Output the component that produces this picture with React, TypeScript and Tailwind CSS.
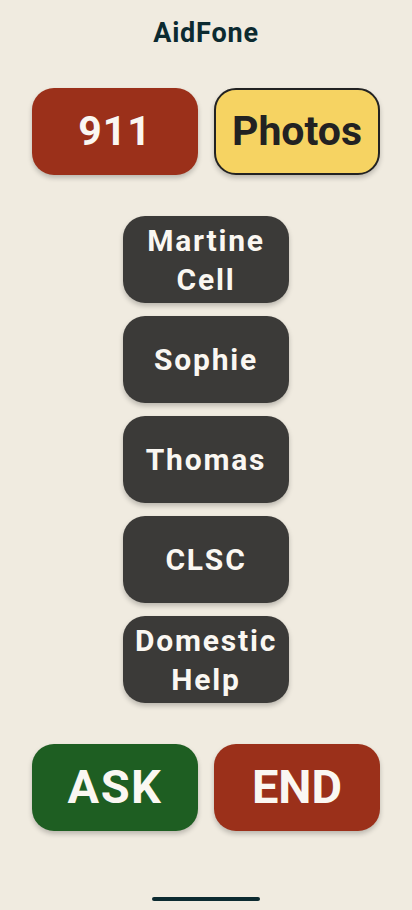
import React from 'react';

const contacts = [
  ['Martine', 'Cell'],
  ['Sophie'],
  ['Thomas'],
  ['CLSC'],
  ['Domestic', 'Help'],
];

const bigBtn =
  'w-[166px] h-[87px] rounded-[22px] flex items-center justify-center font-bold shadow-[0_3px_5px_rgba(0,0,0,0.22)]';

const App: React.FC = () => {
  return (
    <div
      className="w-[412px] h-[910px] bg-[#f0ebe0] flex flex-col items-center"
      style={{ fontFamily: 'Roboto, "Liberation Sans", sans-serif' }}
    >
      <h1 className="mt-[16px] h-[34px] text-[27px] leading-[34px] tracking-[0.8px] font-bold text-[#0c2a30]">AidFone</h1>

      <div className="mt-[38px] flex gap-[16px]">
        <button className={`${bigBtn} bg-[#9b301a] text-[#faf7f2] text-[41px] tracking-[1px]`}>911</button>
        <button className={`${bigBtn} bg-[#f6d362] text-[#222222] text-[41px] border-2 border-[#222222]`}>
          Photos
        </button>
      </div>

      <div className="mt-[41px] flex flex-col gap-[13px]">
        {contacts.map((lines) => (
          <button
            key={lines.join(' ')}
            className="w-[166px] h-[87px] rounded-[22px] bg-[#3b3a38] text-[#faf7f2] font-bold text-[30px] leading-[39px] tracking-[1.8px] flex flex-col items-center justify-center shadow-[0_3px_5px_rgba(0,0,0,0.22)]"
          >
            {lines.map((l) => (
              <span key={l}>{l}</span>
            ))}
          </button>
        ))}
      </div>

      <div className="mt-[41px] flex gap-[16px]">
        <button className={`${bigBtn} bg-[#1e5e22] text-[#faf7f2] text-[47px] tracking-[1.5px]`}>ASK</button>
        <button className={`${bigBtn} bg-[#9b301a] text-[#faf7f2] text-[47px]`}>END</button>
      </div>

      <div className="mt-auto mb-[9px] w-[108px] h-[4px] rounded-full bg-[#0c2a30]" />
    </div>
  );
};

export default App;
